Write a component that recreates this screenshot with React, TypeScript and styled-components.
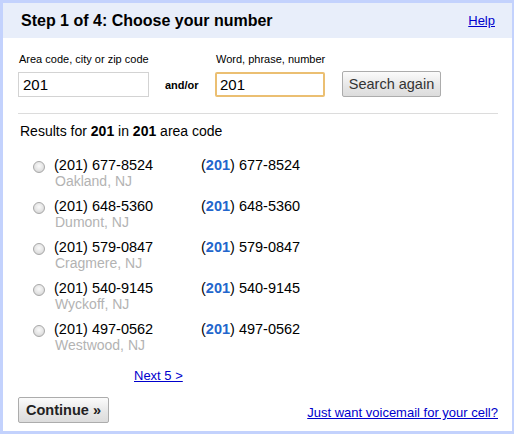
import React from "react";
import styled, { createGlobalStyle } from "styled-components";

const Global = createGlobalStyle`
  html, body { margin: 0; padding: 0; background: #fff; }
  body { font-family: Arial, "Liberation Sans", sans-serif; color: #000; }
  * { box-sizing: border-box; }
`;

const Frame = styled.div`
  width: 514px;
  height: 434px;
  border: 3px solid #c3d2fd;
  border-right-width: 2px;
  display: flex;
  flex-direction: column;
  background: #fff;
`;

const Header = styled.div`
  height: 35px;
  background: #e8eefa;
  display: flex;
  align-items: center;
  justify-content: space-between;
  padding: 0 17px 0 18px;
`;

const Title = styled.h1`
  margin: 0;
  font-size: 16px;
  font-weight: bold;
`;

const Link = styled.a<{ $size?: number }>`
  color: #0000cc;
  text-decoration: underline;
  font-size: ${(p) => p.$size ?? 13}px;
  cursor: pointer;
`;

const Body = styled.div`
  flex: 1;
  padding: 14px 14px 0 15px;
  display: flex;
  flex-direction: column;
`;

const FormRow = styled.div`
  display: flex;
  align-items: flex-end;
`;

const Field = styled.div<{ $width: number }>`
  display: flex;
  flex-direction: column;
  width: ${(p) => p.$width}px;
`;

const Label = styled.label`
  font-size: 11px;
  line-height: 15px;
  margin: 0 0 5px 0;
  padding-left: 1px;
  white-space: nowrap;
`;

const TextInput = styled.input<{ $focused?: boolean }>`
  height: 25px;
  width: 100%;
  font-family: Arial, "Liberation Sans", sans-serif;
  font-size: 15px;
  padding: 0 4px;
  border: ${(p) => (p.$focused ? "2px solid #ebbf72" : "1px solid #d3d3d3")};
  padding-left: ${(p) => (p.$focused ? "3px" : "4px")};
  border-radius: ${(p) => (p.$focused ? "2px" : "0")};
  outline: none;
  color: #000;
  background: #fff;
`;

const AndOr = styled.span`
  font-size: 11px;
  font-weight: bold;
  width: 66px;
  padding-left: 16px;
  height: 25px;
  display: flex;
  align-items: flex-end;
  padding-bottom: 6px;
`;

const Button = styled.button<{ $bold?: boolean }>`
  height: 26px;
  font-family: Arial, "Liberation Sans", sans-serif;
  font-size: 14.5px;
  font-weight: ${(p) => (p.$bold ? "bold" : "normal")};
  color: ${(p) => (p.$bold ? "#222" : "#333")};
  border: 1px solid #acacac;
  border-radius: 2px;
  background: linear-gradient(#fbfbfb, #e6e6e6 60%, #dcdcdc);
  padding: 0 7px;
  cursor: pointer;
`;

const SearchButton = styled(Button)`
  margin-left: 17px;
  width: 99px;
  padding: 0;
`;

const Separator = styled.hr`
  border: none;
  border-top: 1px solid #dcdcdc;
  margin: 16px 0 0 0;
  height: 0;
`;

const ResultsTitle = styled.div`
  font-size: 14px;
  line-height: 17px;
  margin: 9px 0 0 2px;
`;

const List = styled.div`
  display: flex;
  flex-direction: column;
  gap: 9px;
  margin-top: 17px;
  padding-left: 15px;
`;

const Row = styled.div`
  display: grid;
  grid-template-columns: 21px 147px auto;
  align-items: start;
`;

const Radio = styled.input.attrs({ type: "radio" })`
  appearance: none;
  -webkit-appearance: none;
  margin: 4px 0 0 0;
  width: 12px;
  height: 12px;
  border-radius: 50%;
  border: 1px solid #a8a8a8;
  background: radial-gradient(circle at 50% 40%, #fafafa 0%, #e4e4e4 55%, #c8c8c8 100%);
`;

const NumberCol = styled.div`
  display: flex;
  flex-direction: column;
`;

const Phone = styled.span`
  font-size: 14.5px;
  line-height: 16px;
`;

const City = styled.span`
  font-size: 14px;
  line-height: 16px;
  color: #b3b3b3;
  margin-left: 1px;
`;

const Highlight = styled.b`
  color: #2266cc;
`;

const NextWrap = styled.div`
  margin-top: 14px;
  padding-left: 116px;
  line-height: 16px;
`;

const Footer = styled.div`
  display: flex;
  justify-content: space-between;
  align-items: flex-end;
  margin-top: 13px;
`;

const ContinueButton = styled(Button)`
  width: 91px;
  height: 26px;
  padding: 0;
`;

const VoiceLink = styled(Link)`
  margin-bottom: 3px;
  margin-right: 0;
`;

const results = [
  { num: "677-8524", city: "Oakland, NJ" },
  { num: "648-5360", city: "Dumont, NJ" },
  { num: "579-0847", city: "Cragmere, NJ" },
  { num: "540-9145", city: "Wyckoff, NJ" },
  { num: "497-0562", city: "Westwood, NJ" },
];

export default function App() {
  return (
    <>
      <Global />
      <Frame>
        <Header>
          <Title>Step 1 of 4: Choose your number</Title>
          <Link>Help</Link>
        </Header>
        <Body>
          <FormRow>
            <Field $width={131}>
              <Label>Area code, city or zip code</Label>
              <TextInput defaultValue="201" />
            </Field>
            <AndOr>and/or</AndOr>
            <Field $width={110}>
              <Label>Word, phrase, number</Label>
              <TextInput $focused defaultValue="201" />
            </Field>
            <SearchButton>Search again</SearchButton>
          </FormRow>
          <Separator />
          <ResultsTitle>
            Results for <b>201</b> in <b>201</b> area code
          </ResultsTitle>
          <List>
            {results.map((r) => (
              <Row key={r.num}>
                <Radio name="num" />
                <NumberCol>
                  <Phone>(201) {r.num}</Phone>
                  <City>{r.city}</City>
                </NumberCol>
                <Phone>
                  (<Highlight>201</Highlight>) {r.num}
                </Phone>
              </Row>
            ))}
          </List>
          <NextWrap>
            <Link>Next 5 &gt;</Link>
          </NextWrap>
          <Footer>
            <ContinueButton $bold>Continue »</ContinueButton>
            <VoiceLink>Just want voicemail for your cell?</VoiceLink>
          </Footer>
        </Body>
      </Frame>
    </>
  );
}
